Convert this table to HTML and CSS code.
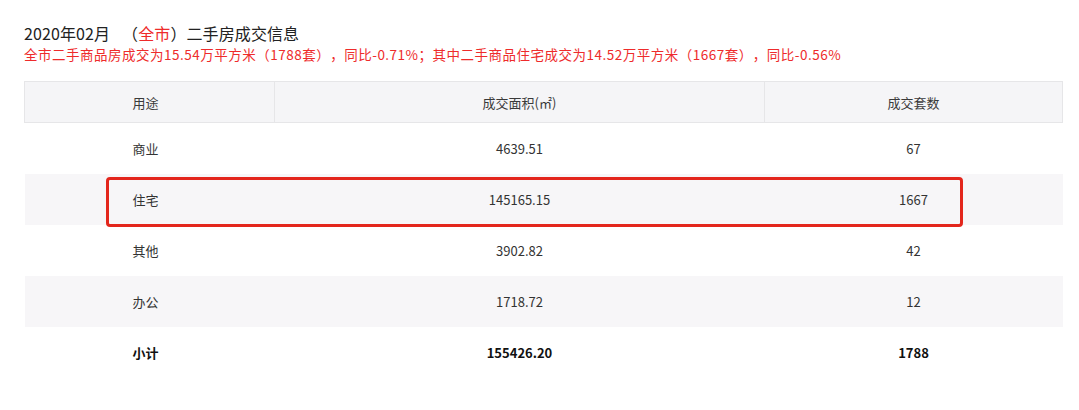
FILE: index.html
```html
<!DOCTYPE html>
<html lang="zh-CN">
<head>
<meta charset="utf-8">
<title>二手房成交信息</title>
<link rel="stylesheet" href="styles.css">
</head>
<body>
<div class="page">
  <h1 class="title">2020年02月<span class="gap"></span>（<span class="red">全市</span>）二手房成交信息</h1>
  <p class="summary">全市二手商品房成交为15.54万平方米（1788套），同比-0.71%；其中二手商品住宅成交为14.52万平方米（1667套），同比-0.56%</p>
  <div class="table-wrap">
    <table class="data">
      <thead>
        <tr><th class="c1">用途</th><th class="c2">成交面积(㎡)</th><th class="c3">成交套数</th></tr>
      </thead>
      <tbody>
        <tr><td>商业</td><td>4639.51</td><td>67</td></tr>
        <tr class="alt"><td>住宅</td><td>145165.15</td><td>1667</td></tr>
        <tr><td>其他</td><td>3902.82</td><td>42</td></tr>
        <tr class="alt"><td>办公</td><td>1718.72</td><td>12</td></tr>
        <tr class="total"><td>小计</td><td>155426.20</td><td>1788</td></tr>
      </tbody>
    </table>
    <div class="highlight"></div>
  </div>
</div>
</body>
</html>
```

FILE: styles.css
```css
html, body {
  margin: 0;
  padding: 0;
  background: #ffffff;
}
body {
  font-family: "Noto Sans CJK SC", "Noto Sans", sans-serif;
  color: #333333;
  text-spacing-trim: space-all;
}
.page {
  padding: 23px 16px 0 24px;
}
.title {
  margin: 0;
  font-size: 16px;
  font-weight: normal;
  line-height: 20px;
  color: #222222;
  letter-spacing: 0.1px;
}
.gap {
  display: inline-block;
  width: 12px;
}
.red {
  color: #ee2b2b;
}
.summary {
  margin: 1px 0 0 0;
  font-size: 13.5px;
  line-height: 20px;
  color: #ee2b2b;
  letter-spacing: 0.5px;
}
.table-wrap {
  position: relative;
  margin-top: 17px;
  width: 1039px;
}
.data {
  width: 100%;
  border-collapse: collapse;
  table-layout: fixed;
  font-size: 13px;
}
.data th,
.data td {
  box-sizing: border-box;
}
.data th {
  height: 41px;
  padding: 0;
  background: #f5f5f7;
  border: 1px solid #e6e6e8;
  font-weight: normal;
  color: #3a3a3a;
  text-align: center;
}
.c1 { width: 250px; }
.c2 { width: 490px; }
.data td {
  height: 51px;
  padding: 0;
  text-align: center;
  color: #333333;
}
.data th.c1,
.data td:first-child {
  padding-right: 8px;
}
.data tr.alt td {
  background: #f7f6f8;
}
.data tr.total td {
  font-weight: bold;
  color: #111111;
}
.highlight {
  position: absolute;
  left: 82px;
  top: 96px;
  width: 851px;
  height: 44px;
  border: 3px solid #e3261c;
  border-radius: 4px;
}
```
